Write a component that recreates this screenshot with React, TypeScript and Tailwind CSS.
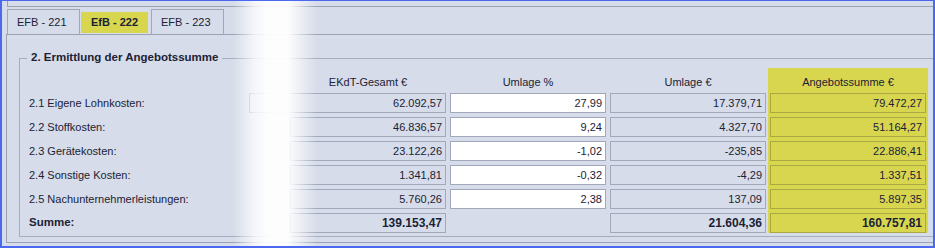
import React from "react";

const rows = [
  { label: "2.1 Eigene Lohnkosten:", ekdt: "62.092,57", pct: "27,99", uml: "17.379,71", sum: "79.472,27" },
  { label: "2.2 Stoffkosten:", ekdt: "46.836,57", pct: "9,24", uml: "4.327,70", sum: "51.164,27" },
  { label: "2.3 Gerätekosten:", ekdt: "23.122,26", pct: "-1,02", uml: "-235,85", sum: "22.886,41" },
  { label: "2.4 Sonstige Kosten:", ekdt: "1.341,81", pct: "-0,32", uml: "-4,29", sum: "1.337,51" },
  { label: "2.5 Nachunternehmerleistungen:", ekdt: "5.760,26", pct: "2,38", uml: "137,09", sum: "5.897,35" },
];

const font = "font-['Liberation_Sans',Arial,sans-serif]";

function GrayBox({ value, bold, className = "" }: { value: string; bold?: boolean; className?: string }) {
  return (
    <div
      className={`h-[20px] border border-[#a0a8b9] bg-[#d6dce9] flex items-center justify-end pr-[3px] ${
        bold ? "font-bold text-[12px]" : "text-[11px]"
      } ${className}`}
    >
      {value}
    </div>
  );
}

export default function App() {
  return (
    <div
      className={`relative w-[935px] h-[248px] overflow-hidden bg-[#d6dce9] border-l-2 border-r-2 border-t border-b-2 border-[#4a68f0] text-[#1b2235] ${font}`}
    >
      {/* upper frame remnant */}
      <div className="ml-[5px] h-[6px] border-l border-b border-[#9aa2b3]" />

      {/* tabs */}
      <div className="ml-[5px] mt-[2px] flex h-[25px] items-start text-[11px] leading-none">
        <div className="w-[73px] h-[25px] border-l border-t border-r border-[#a0a8b8] flex items-center pl-[9px]">
          EFB - 221
        </div>
        <div className="ml-[1px] mt-[3px] w-[67px] h-[21px] bg-[#d8d54f] flex items-center justify-center font-bold">
          EfB - 222
        </div>
        <div className="ml-[3px] w-[73px] h-[25px] border-l border-t border-r border-[#a0a8b8] flex items-center pl-[9px]">
          EFB - 223
        </div>
      </div>

      {/* tab panel */}
      <div className="ml-[4px] mb-[3px] border-l border-t border-b border-[#9aa2b3]">
        <div className="relative ml-[12px] mt-[23px] mb-[5px] border-l border-t border-b border-[#a6adbc] pt-[9px] pb-[3px]">
          <div className="absolute left-[7px] top-[-9px] px-[4px] bg-[#d6dce9] font-bold text-[11.5px] leading-[14px]">
            2. Ermittlung der Angebotssumme
          </div>

          <div className="flex pl-[9px]">
            {/* labels */}
            <div className="w-[220px] flex flex-col">
              <div className="h-[25px]" />
              <div className="flex flex-col gap-[4px]">
                {rows.map((r) => (
                  <div key={r.label} className="h-[20px] flex items-center text-[11px]">
                    {r.label}
                  </div>
                ))}
                <div className="h-[20px] flex items-center text-[11.5px] font-bold">Summe:</div>
              </div>
            </div>

            {/* EKdT */}
            <div className="w-[197px] flex flex-col">
              <div className="h-[25px] pl-[41px] pb-[4px] flex items-end justify-center text-[11px] leading-[14px]">
                EKdT-Gesamt €
              </div>
              <div className="flex flex-col gap-[4px]">
                {rows.map((r, i) => (
                  <GrayBox key={r.label} value={r.ekdt} className={i === 0 ? "w-full" : "w-[156px] ml-auto"} />
                ))}
                <GrayBox value="139.153,47" bold className="w-[156px] ml-auto" />
              </div>
            </div>

            {/* Umlage % */}
            <div className="ml-[4px] w-[156px] flex flex-col">
              <div className="h-[25px] pb-[4px] flex items-end justify-center text-[11px] leading-[14px]">
                Umlage %
              </div>
              <div className="flex flex-col gap-[4px]">
                {rows.map((r) => (
                  <div
                    key={r.label}
                    className="h-[20px] border border-[#a0a8b9] bg-white flex items-center justify-end pr-[3px] text-[11px]"
                  >
                    {r.pct}
                  </div>
                ))}
                <div className="h-[20px]" />
              </div>
            </div>

            {/* Umlage € */}
            <div className="ml-[4px] w-[156px] flex flex-col">
              <div className="h-[25px] pb-[4px] flex items-end justify-center text-[11px] leading-[14px]">
                Umlage €
              </div>
              <div className="flex flex-col gap-[4px]">
                {rows.map((r) => (
                  <GrayBox key={r.label} value={r.uml} />
                ))}
                <GrayBox value="21.604,36" bold />
              </div>
            </div>

            {/* Angebotssumme € */}
            <div className="ml-[2px] w-[160px] px-[2px] bg-[#d8d54f] flex flex-col">
              <div className="h-[25px] pb-[4px] flex items-end justify-center text-[11px] leading-[14px]">
                Angebotssumme €
              </div>
              <div className="flex flex-col gap-[4px]">
                {rows.map((r) => (
                  <div
                    key={r.label}
                    className="h-[20px] border border-[#aaa745] bg-[#d8d54f] flex items-center justify-end pr-[3px] text-[11px]"
                  >
                    {r.sum}
                  </div>
                ))}
                <div className="h-[20px] border border-[#aaa745] bg-[#d8d54f] flex items-center justify-end pr-[3px] text-[12px] font-bold">
                  160.757,81
                </div>
              </div>
            </div>
          </div>
        </div>
      </div>

      {/* white fade overlay */}
      <div className="pointer-events-none absolute top-[-1px] bottom-[-2px] left-[231px] w-[84px] bg-[linear-gradient(to_right,rgba(255,255,255,0)_0%,rgba(255,255,255,0.75)_25%,rgba(255,255,255,0.95)_40%,rgba(255,255,255,0.95)_65%,rgba(255,255,255,0)_100%)]" />
    </div>
  );
}
